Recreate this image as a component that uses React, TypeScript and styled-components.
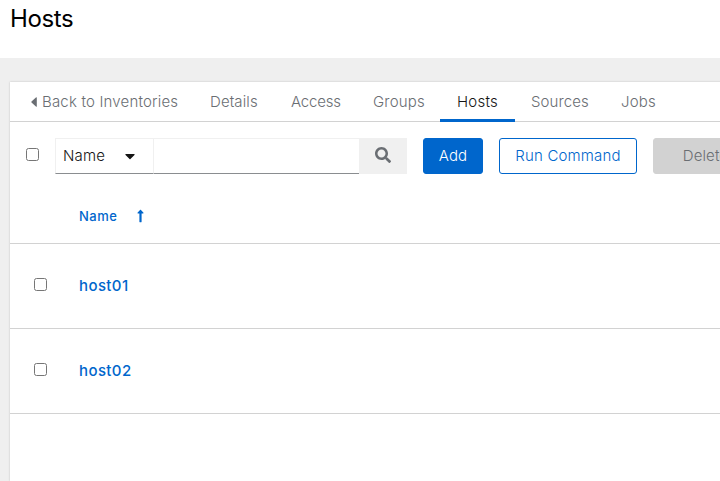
import React from "react";
import styled, { createGlobalStyle } from "styled-components";

const GlobalStyle = createGlobalStyle`
  * { box-sizing: border-box; }
  html, body { margin: 0; height: 100%; overflow: hidden; }
  body {
    background: #efefef;
    color: #151515;
    font-family: Inter, "Liberation Sans", sans-serif;
    font-size: 15px;
    font-weight: 350;
    line-height: 24px;
  }
`;

const Page = styled.div`
  height: 481px;
  width: 720px;
  overflow: hidden;
  display: flex;
  flex-direction: column;
`;

const PageHeader = styled.header`
  flex: 0 0 58px;
  background: #fff;
  padding: 3px 10px 0;
`;

const Title = styled.h1`
  margin: 0;
  font-size: 24px;
  font-weight: 400;
  line-height: 31px;
  letter-spacing: -0.35px;
  color: #000;
`;

const Card = styled.main`
  flex: 1;
  margin: 24px 0 0 10px;
  width: 1200px;
  background: #fff;
  box-shadow: 0 0 2px rgba(3, 3, 3, 0.2);
`;

const Tabs = styled.nav`
  display: flex;
  height: 40px;
  padding-left: 5px;
  border-bottom: 1px solid #d2d2d2;
`;

const Tab = styled.a<{ $width: number; $active?: boolean; $spacing?: number }>`
  display: flex;
  align-items: center;
  width: ${(p) => p.$width}px;
  height: 40px;
  padding: 0 0 0 ${(p) => (p.$active ? 17 : 16)}px;
  white-space: nowrap;
  letter-spacing: ${(p) => p.$spacing ?? 0}px;
  color: ${(p) => (p.$active ? "#151515" : "#6a6e73")};
  border-bottom: 3px solid ${(p) => (p.$active ? "#06c" : "transparent")};
  border-top: 3px solid transparent;

  svg { margin-right: 5px; }
`;

const Toolbar = styled.div`
  display: flex;
  height: 67px;
  padding: 16px 0 0 16px;
`;

const Check = styled.input.attrs({ type: "checkbox" })`
  width: 13px;
  height: 13px;
  margin: 0;
  flex: none;
`;

const SelectAll = styled.label`
  width: 29px;
  padding-top: 10px;
  line-height: 0;
`;

const FilterSelect = styled.button`
  display: flex;
  align-items: center;
  justify-content: space-between;
  width: 98px;
  height: 36px;
  padding: 0 18px 0 7px;
  font: inherit;
  letter-spacing: 0.2px;
  color: #151515;
  background: #fff;
  border: 1px solid #f0f0f0;
  border-right: 0;
  border-bottom-color: #8a8d90;
`;

const SearchInput = styled.input`
  width: 206px;
  height: 36px;
  padding: 0 8px;
  font: inherit;
  border: 1px solid #f0f0f0;
  border-right: 0;
  border-bottom-color: #8a8d90;
  border-radius: 0;
  outline: none;
`;

const SearchButton = styled.button`
  display: flex;
  align-items: center;
  justify-content: center;
  width: 48px;
  height: 36px;
  padding: 0 0 2px;
  border: 0;
  background: #f0f0f0;
`;

const Button = styled.button<{ $kind: "primary" | "secondary" | "disabled"; $width: number; $spacing?: number }>`
  width: ${(p) => p.$width}px;
  height: 36px;
  margin-left: 16px;
  padding: 0;
  font: inherit;
  letter-spacing: ${(p) => p.$spacing ?? 0}px;
  border-radius: 3px;
  border: 1px solid ${(p) => ({ primary: "#06c", secondary: "#06c", disabled: "#d2d2d2" })[p.$kind]};
  background: ${(p) => ({ primary: "#06c", secondary: "#fff", disabled: "#d2d2d2" })[p.$kind]};
  color: ${(p) => ({ primary: "#fff", secondary: "#06c", disabled: "#6a6e73" })[p.$kind]};
`;

const HeadRow = styled.div`
  display: flex;
  align-items: center;
  height: 55px;
  padding-left: 69px;
  border-bottom: 1px solid #d2d2d2;
  color: #06c;
  font-size: 13px;
  font-weight: 550;
  letter-spacing: 0.5px;

  svg { margin-left: 20px; }
`;

const HostRow = styled.div`
  display: flex;
  align-items: center;
  height: 85px;
  padding: 0 0 3px 24px;
  border-bottom: 1px solid #d2d2d2;
`;

const HostLink = styled.a`
  margin-left: 32px;
  padding-top: 3px;
  color: #06c;
  font-weight: 550;
  letter-spacing: 0.4px;
`;

const CaretLeft = () => (
  <svg width="6" height="10" viewBox="0 0 6 10" fill="#6a6e73">
    <path d="M5.8.8v8.4c0 .6-.5.8-.9.4L.5 5.4a.6.6 0 0 1 0-.8L4.900.4c.4-.4.9-.2.9.4z" />
  </svg>
);

const CaretDown = () => (
  <svg width="10" height="16" viewBox="0 0 320 512" fill="#151515">
    <path d="M31.300 192h257.300c17.800 0 26.700 21.500 14.100 34.100L174.100 354.800c-7.800 7.800-20.500 7.800-28.300 0L17.200 226.100C4.600 213.500 13.500 192 31.300 192z" />
  </svg>
);

const SearchIcon = () => (
  <svg width="16" height="16" viewBox="0 0 512 512" fill="#6a6e73">
    <path d="M505 442.700L405.300 343c-4.500-4.500-10.600-7-17-7H372c27.600-35.300 44-79.700 44-128C416 93.100 322.900 0 208 0S0 93.100 0 208s93.100 208 208 208c48.300 0 92.700-16.400 128-44v16.300c0 6.400 2.500 12.500 7 17l99.700 99.700c9.400 9.400 24.600 9.400 33.900 0l28.300-28.300c9.400-9.400 9.400-24.600.1-34zM208 336c-70.700 0-128-57.200-128-128 0-70.700 57.200-128 128-128 70.700 0 128 57.200 128 128 0 70.700-57.200 128-128 128z" />
  </svg>
);

const SortUp = () => (
  <svg width="7" height="14" viewBox="0 0 256 512" fill="#06c">
    <path d="M88 166.100V468c0 6.600 5.400 12 12 12h56c6.600 0 12-5.400 12-12V166.100h46.100c21.400 0 32.100-25.900 17-41L145 39c-9.400-9.400-24.600-9.400-33.900 0l-86.100 86.100c-15.100 15.100-4.400 41 17 41H88z" />
  </svg>
);

const tabs = [
  { label: "Details", width: 81, spacing: 0.1 },
  { label: "Access", width: 82, spacing: -0.2 },
  { label: "Groups", width: 83, spacing: 0.2 },
  { label: "Hosts", width: 75, active: true, spacing: 0.25 },
  { label: "Sources", width: 90, spacing: 0.1 },
  { label: "Jobs", width: 68, spacing: 0.2 },
];

export default function App() {
  return (
    <>
      <GlobalStyle />
      <Page>
        <PageHeader>
          <Title>Hosts</Title>
        </PageHeader>
        <Card>
          <Tabs>
            <Tab $width={179} $spacing={0.18}>
              <CaretLeft />
              Back to Inventories
            </Tab>
            {tabs.map((t) => (
              <Tab key={t.label} $width={t.width} $active={t.active} $spacing={t.spacing}>
                {t.label}
              </Tab>
            ))}
          </Tabs>
          <Toolbar>
            <SelectAll>
              <Check />
            </SelectAll>
            <FilterSelect>
              Name
              <CaretDown />
            </FilterSelect>
            <SearchInput />
            <SearchButton>
              <SearchIcon />
            </SearchButton>
            <Button $kind="primary" $width={60} $spacing={0.1}>Add</Button>
            <Button $kind="secondary" $width={138} $spacing={0.18}>Run Command</Button>
            <Button $kind="disabled" $width={105} $spacing={0.1}>Delete</Button>
          </Toolbar>
          <HeadRow>
            Name
            <SortUp />
          </HeadRow>
          {["host01", "host02"].map((name) => (
            <HostRow key={name}>
              <Check />
              <HostLink>{name}</HostLink>
            </HostRow>
          ))}
        </Card>
      </Page>
    </>
  );
}
